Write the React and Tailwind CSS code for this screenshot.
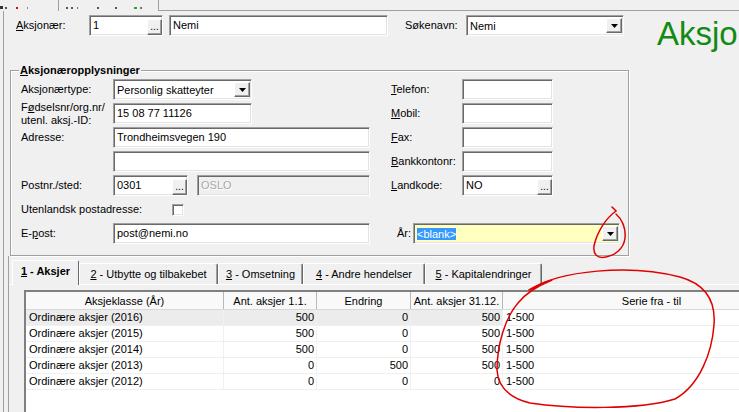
import React from 'react';

const sunken =
  'border border-[#a0a0a0] border-r-white border-b-white shadow-[inset_1px_1px_0_#696969,inset_-1px_-1px_0_#e3e3e3]';
const raised =
  'border border-white border-r-[#696969] border-b-[#696969] shadow-[inset_-1px_-1px_0_#a0a0a0] bg-[#f0f0f0]';

const Arrow = () => (
  <svg width="7" height="4" viewBox="0 0 7 4">
    <path d="M0 0h7L3.5 4z" fill="#000" />
  </svg>
);

const DotsButton = () => (
  <div className={`${raised} shrink-0 w-[15px] h-[16px] self-end flex items-end justify-center leading-[10px] text-[10px] pb-[2px]`}>
    ...
  </div>
);

const DropButton = () => (
  <div className={`${raised} shrink-0 w-[16px] h-[15px] mr-[1px] flex items-center justify-center`}>
    <Arrow />
  </div>
);

function Input({ className = '', children, dots, bg = 'bg-white' }) {
  return (
    <div className={`${sunken} ${bg} ${className} shrink-0 h-[21px] flex`}>
      <div className="flex-1 pl-[3px] pt-[2px] leading-[14px] whitespace-nowrap overflow-hidden">{children}</div>
      {dots && <DotsButton />}
    </div>
  );
}

function Combo({ className = '', children, bg = 'bg-white' }) {
  return (
    <div className={`${sunken} ${bg} ${className} shrink-0 h-[21px] flex items-center`}>
      <div className="flex-1 pl-[3px] leading-[14px] whitespace-nowrap overflow-hidden">{children}</div>
      <DropButton />
    </div>
  );
}

const tabs = [
  { n: '1', t: ' - Aksjer', w: 'w-[67px]', active: true },
  { n: '2', t: ' - Utbytte og tilbakebet', w: 'w-[139px]' },
  { n: '3', t: ' - Omsetning', w: 'w-[85px]' },
  { n: '4', t: ' - Andre hendelser', w: 'w-[122px]' },
  { n: '5', t: ' - Kapitalendringer', w: 'w-[117px]' },
];

const rows = [
  ['Ordinære aksjer (2016)', '500', '0', '500', '1-500'],
  ['Ordinære aksjer (2015)', '500', '0', '500', '1-500'],
  ['Ordinære aksjer (2014)', '500', '0', '500', '1-500'],
  ['Ordinære aksjer (2013)', '0', '500', '500', '1-500'],
  ['Ordinære aksjer (2012)', '0', '0', '0', '1-500'],
];

const cols = ['w-[198px]', 'w-[93px]', 'w-[94px]', 'w-[92px]', 'w-[298px]'];
const heads = ['Aksjeklasse (År)', 'Ant. aksjer 1.1.', 'Endring', 'Ant. aksjer 31.12.', 'Serie fra - til'];

const App = () => {
  return (
    <div className="relative w-[739px] h-[412px] overflow-hidden bg-[#f0f0f0] text-[11px] text-black font-['Liberation_Sans',Arial,sans-serif]">
      {/* Top strip (cut-off tab headers) */}
      <div className="flex h-[11px]">
        <div className="w-[159px] h-[11px] shrink-0 border-r border-[#a0a0a0]">
          <svg width="158" height="11" viewBox="0 0 158 11">
            <rect x="0" y="6" width="3" height="3" fill="#333" />
            <rect x="5" y="7" width="2" height="2" fill="#555" />
            <rect x="16" y="7" width="2" height="2" fill="#d01010" />
            <rect x="27" y="7" width="1" height="2" fill="#888" />
            <rect x="58" y="0" width="1" height="11" fill="#a0a0a0" />
            <rect x="66" y="7" width="2" height="2" fill="#555" />
            <rect x="71" y="7" width="2" height="2" fill="#555" />
            <rect x="77" y="7" width="1" height="2" fill="#777" />
            <rect x="97" y="7" width="2" height="2" fill="#555" />
            <rect x="115" y="7" width="2" height="2" fill="#555" />
            <rect x="134" y="7" width="3" height="2" fill="#3aa03a" />
            <rect x="140" y="7" width="2" height="2" fill="#777" />
          </svg>
        </div>
        <div className="flex-1 border-b border-[#a0a0a0]" />
      </div>

      {/* Main frame */}
      <div className="ml-[3px] h-[401px] border-l border-[#a0a0a0] flex flex-col">
        {/* Row 1 */}
        <div className="flex shrink-0 h-[21px] mt-[4px] pl-[12px]">
          <div className="w-[73px] shrink-0 flex items-center">
            <span><u>A</u>ksjonær:</span>
          </div>
          <Input className="w-[74px]" dots>1</Input>
          <Input className="w-[219px] ml-[6px]">Nemi</Input>
          <div className="w-[61px] shrink-0 ml-[17px] flex items-center">Søkenavn:</div>
          <Combo className="w-[158px]">Nemi</Combo>
          <div className="shrink-0 ml-[33px] mt-[2px] text-[33px] leading-[33px] text-[#138a13] whitespace-nowrap">Aksjonær</div>
        </div>

        {/* Group box */}
        <div className="relative shrink-0 ml-[6px] mt-[34px] w-[619px] h-[186px] border border-[#a0a0a0] shadow-[inset_1px_1px_0_#fff,1px_1px_0_#fff]">
          <div className="absolute -top-[8px] left-[8px] px-[1px] bg-[#f0f0f0] font-bold leading-[14px]">
            <u>A</u>ksjonæropplysninger
          </div>
          <div className="flex flex-col gap-[3px] pt-[8px] pl-[10px]">
            <div className="flex h-[21px] items-center">
              <div className="w-[92px] shrink-0">Aksjonærtype:</div>
              <div className="w-[257px] shrink-0 flex">
                <Combo className="w-[139px]">Personlig skatteyter</Combo>
              </div>
              <div className="w-[21px] shrink-0" />
              <div className="w-[71px] shrink-0"><u>T</u>elefon:</div>
              <Input className="w-[91px]" />
            </div>
            <div className="flex h-[21px] items-center">
              <div className="w-[92px] shrink-0 leading-[13px]">
                F<u>ø</u>dselsnr/org.nr/
                <br />
                utenl. aksj.-ID:
              </div>
              <div className="w-[257px] shrink-0 flex">
                <Input className="w-[139px]">15 08 77 11126</Input>
              </div>
              <div className="w-[21px] shrink-0" />
              <div className="w-[71px] shrink-0"><u>M</u>obil:</div>
              <Input className="w-[91px]" />
            </div>
            <div className="flex h-[21px] items-center">
              <div className="w-[92px] shrink-0">Adresse:</div>
              <Input className="w-[257px]">Trondheimsvegen 190</Input>
              <div className="w-[21px] shrink-0" />
              <div className="w-[71px] shrink-0"><u>F</u>ax:</div>
              <Input className="w-[91px]" />
            </div>
            <div className="flex h-[21px] items-center">
              <div className="w-[92px] shrink-0" />
              <Input className="w-[257px]" />
              <div className="w-[21px] shrink-0" />
              <div className="w-[71px] shrink-0"><u>B</u>ankkontonr:</div>
              <Input className="w-[91px]" />
            </div>
            <div className="flex h-[21px] items-center">
              <div className="w-[92px] shrink-0">Postnr./sted:</div>
              <div className="w-[257px] shrink-0 flex">
                <Input className="w-[75px]" dots>0301</Input>
                <Input className="w-[173px] ml-[9px]" bg="bg-[#f0f0f0]">
                  <span className="text-[#a8a8a8] [text-shadow:1px_1px_0_#fff]">OSLO</span>
                </Input>
              </div>
              <div className="w-[21px] shrink-0" />
              <div className="w-[71px] shrink-0"><u>L</u>andkode:</div>
              <Input className="w-[91px]" dots>NO</Input>
            </div>
            <div className="flex h-[21px] items-center">
              <div className="w-[151px] shrink-0">Utenlandsk postadresse:</div>
              <div className={`${sunken} shrink-0 bg-white w-[12px] h-[12px]`} />
            </div>
            <div className="flex h-[21px] items-center">
              <div className="w-[92px] shrink-0">E-<u>p</u>ost:</div>
              <Input className="w-[257px]">post@nemi.no</Input>
              <div className="w-[27px] shrink-0" />
              <div className="w-[16px] shrink-0">År:</div>
              <Combo className="w-[207px]" bg="bg-[#ffffc0]">
                <span className="bg-[#3399ff] text-white">&lt;blank&gt;</span>
              </Combo>
            </div>
          </div>
        </div>

        {/* Tabs */}
        <div className="ml-[4px] flex-1 min-h-0 border-l border-[#a0a0a0] flex flex-col">
          <div className="flex shrink-0 items-end h-[28px] pl-[3px]">
            {tabs.map((tab) =>
              tab.active ? (
                <div
                  key={tab.n}
                  className={`${tab.w} shrink-0 relative z-10 -mb-px h-[25px] bg-[#f0f0f0] border-t border-l border-white border-r border-r-[#696969] rounded-t-[2px] flex items-center justify-center pb-[3px] font-bold`}
                >
                  <span><u>{tab.n}</u>{tab.t}</span>
                </div>
              ) : (
                <div
                  key={tab.n}
                  className={`${tab.w} shrink-0 h-[21px] border-t border-l border-white border-r border-r-[#696969] shadow-[inset_-1px_0_0_#a0a0a0] rounded-t-[2px] flex items-center justify-center`}
                >
                  <span><u>{tab.n}</u>{tab.t}</span>
                </div>
              )
            )}
          </div>
          <div className="flex-1 min-h-0 border-t border-white">
            <div className="ml-[15px] mt-[5px] h-[140px] w-[777px] bg-white border-t-2 border-l-2 border-t-[#808080] border-l-[#808080]">
              <div className="flex h-[18px] bg-[#f9f9f9] border-b border-[#d8d8d8]">
                {heads.map((h, i) => (
                  <div key={h} className={`${cols[i]} shrink-0 border-r border-[#b8b8b8] flex items-center justify-center leading-[14px]`}>
                    {h}
                  </div>
                ))}
              </div>
              {rows.map((r, ri) => (
                <div key={ri} className="flex h-[16px] border-b border-[#f0f0f0]">
                  {r.map((c, ci) => (
                    <div
                      key={ci}
                      className={`${cols[ci]} shrink-0 leading-[15px] border-r border-[#f0f0f0] ${
                        ri === 0 && ci < 4 ? 'bg-[#ececec]' : ''
                      } ${ci === 0 ? 'pl-[3px]' : ci === 4 ? 'pl-[3px]' : 'text-right pr-[2px]'}`}
                    >
                      {c}
                    </div>
                  ))}
                </div>
              ))}
            </div>
          </div>
        </div>
      </div>

      {/* Red hand-drawn annotations */}
      <svg className="absolute inset-0 pointer-events-none" width="739" height="412" viewBox="0 0 739 412">
        <path
          d="M612 207 L616 211 C606 218 597 232 594 246 C593 254 597 259 606 257 C616 255 624 248 625 238 C626 228 622 219 616 214"
          fill="none"
          stroke="#e00000"
          strokeWidth="1.5"
          strokeLinecap="round"
        />
        <path
          d="M545 282 L531 289 M529 290 C560 270 630 264 680 277 C705 284 716 300 714 325 C712 352 700 385 675 399 C640 410 570 409 530 403 C510 398 498 388 497 370 C497 345 505 318 518 303 C525 294 535 287 552 280"
          fill="none"
          stroke="#e00000"
          strokeWidth="1.5"
          strokeLinecap="round"
        />
      </svg>
    </div>
  );
};

export default App;
